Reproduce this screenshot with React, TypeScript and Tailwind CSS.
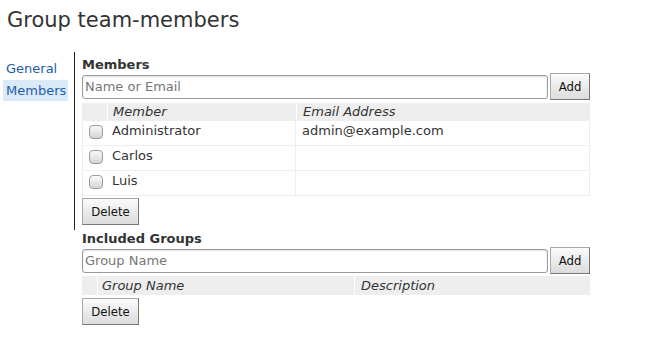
import React from 'react';

const members = [
  { name: 'Administrator', email: 'admin@example.com' },
  { name: 'Carlos', email: '' },
  { name: 'Luis', email: '' },
];

function Btn({ label, w }: { label: string; w: string }) {
  return (
    <button
      className={`${w} h-[27px] shrink-0 border border-[#a8a8a8] border-b-[#777] border-r-[#777] bg-gradient-to-b from-[#fbfbfb] to-[#dcdcdc] text-[13px] text-[#111] font-['DejaVu_Sans_Condensed','DejaVu_Sans',sans-serif]`}
    >
      {label}
    </button>
  );
}

function Field({ placeholder }: { placeholder: string }) {
  return (
    <input
      placeholder={placeholder}
      className="w-[466px] h-[24px] border border-[#9a9a9a] rounded-[3px] px-[2px] text-[13px] text-[#333] placeholder:text-[#777] shadow-[inset_0_1px_2px_rgba(0,0,0,0.12)] outline-none"
    />
  );
}

function Check() {
  return (
    <span className="w-[14px] h-[14px] -mt-[3px] rounded-[4px] border border-[#9c9c9c] bg-gradient-to-b from-[#fafafa] to-[#d4d4d4] shrink-0" />
  );
}

export default function App() {
  return (
    <div className="w-[652px] h-[347px] bg-white text-[#333] text-[13px] font-['DejaVu_Sans',sans-serif] overflow-hidden">
      <h1 className="pl-[7px] pt-[6px] text-[21px] leading-[28px] text-[#333]">Group team-members</h1>

      <div className="flex mt-[18px]">
        {/* left nav */}
        <div className="w-[74px] pt-[6px]">
          <div className="ml-[3px] w-[65px] h-[22px] leading-[22px] pl-[3px] text-[#1d5ea8]">General</div>
          <div className="ml-[3px] w-[65px] h-[21px] leading-[21px] pl-[3px] text-[#1d5ea8] bg-[#daeaf8]">Members</div>
        </div>

        {/* members */}
        <div className="border-l border-[#222] pl-[7px] pb-[5px] w-[516px]">
          <div className="pt-[4px] leading-[17px] font-bold">Members</div>
          <div className="flex items-center gap-[2px] h-[27px]">
            <Field placeholder="Name or Email" />
            <Btn label="Add" w="w-[40px]" />
          </div>

          <div className="mt-[3px] w-[508px]">
            <div className="flex gap-[1px] h-[18px] leading-[18px] italic">
              <div className="w-[25px] bg-[#eee]" />
              <div className="w-[188px] bg-[#eee] pl-[5px]">Member</div>
              <div className="flex-1 bg-[#eee] pl-[6px]">Email Address</div>
            </div>
            {members.map((m) => (
              <div key={m.name} className="flex h-[25px] border-x border-b border-[#eee]">
                <div className="w-[213px] flex items-center pl-[6px] gap-[9px] border-r border-[#eee]">
                  <Check />
                  <span className="-mt-[4px]">{m.name}</span>
                </div>
                <div className="flex-1 pl-[6px] leading-[20px]">{m.email}</div>
              </div>
            ))}
          </div>

          <div className="mt-[2px]">
            <Btn label="Delete" w="w-[57px]" />
          </div>
        </div>
      </div>

      {/* included groups */}
      <div className="ml-[82px] w-[508px]">
        <div className="leading-[17px] font-bold">Included Groups</div>
        <div className="flex items-center gap-[2px] h-[27px]">
          <Field placeholder="Group Name" />
          <Btn label="Add" w="w-[40px]" />
        </div>
        <div className="mt-[2px] flex gap-[1px] h-[19px] leading-[19px] italic">
          <div className="w-[15px] bg-[#eee]" />
          <div className="w-[256px] bg-[#eee] pl-[4px]">Group Name</div>
          <div className="flex-1 bg-[#eee] pl-[6px]">Description</div>
        </div>
        <div className="mt-[3px]">
          <Btn label="Delete" w="w-[57px]" />
        </div>
      </div>
    </div>
  );
}
